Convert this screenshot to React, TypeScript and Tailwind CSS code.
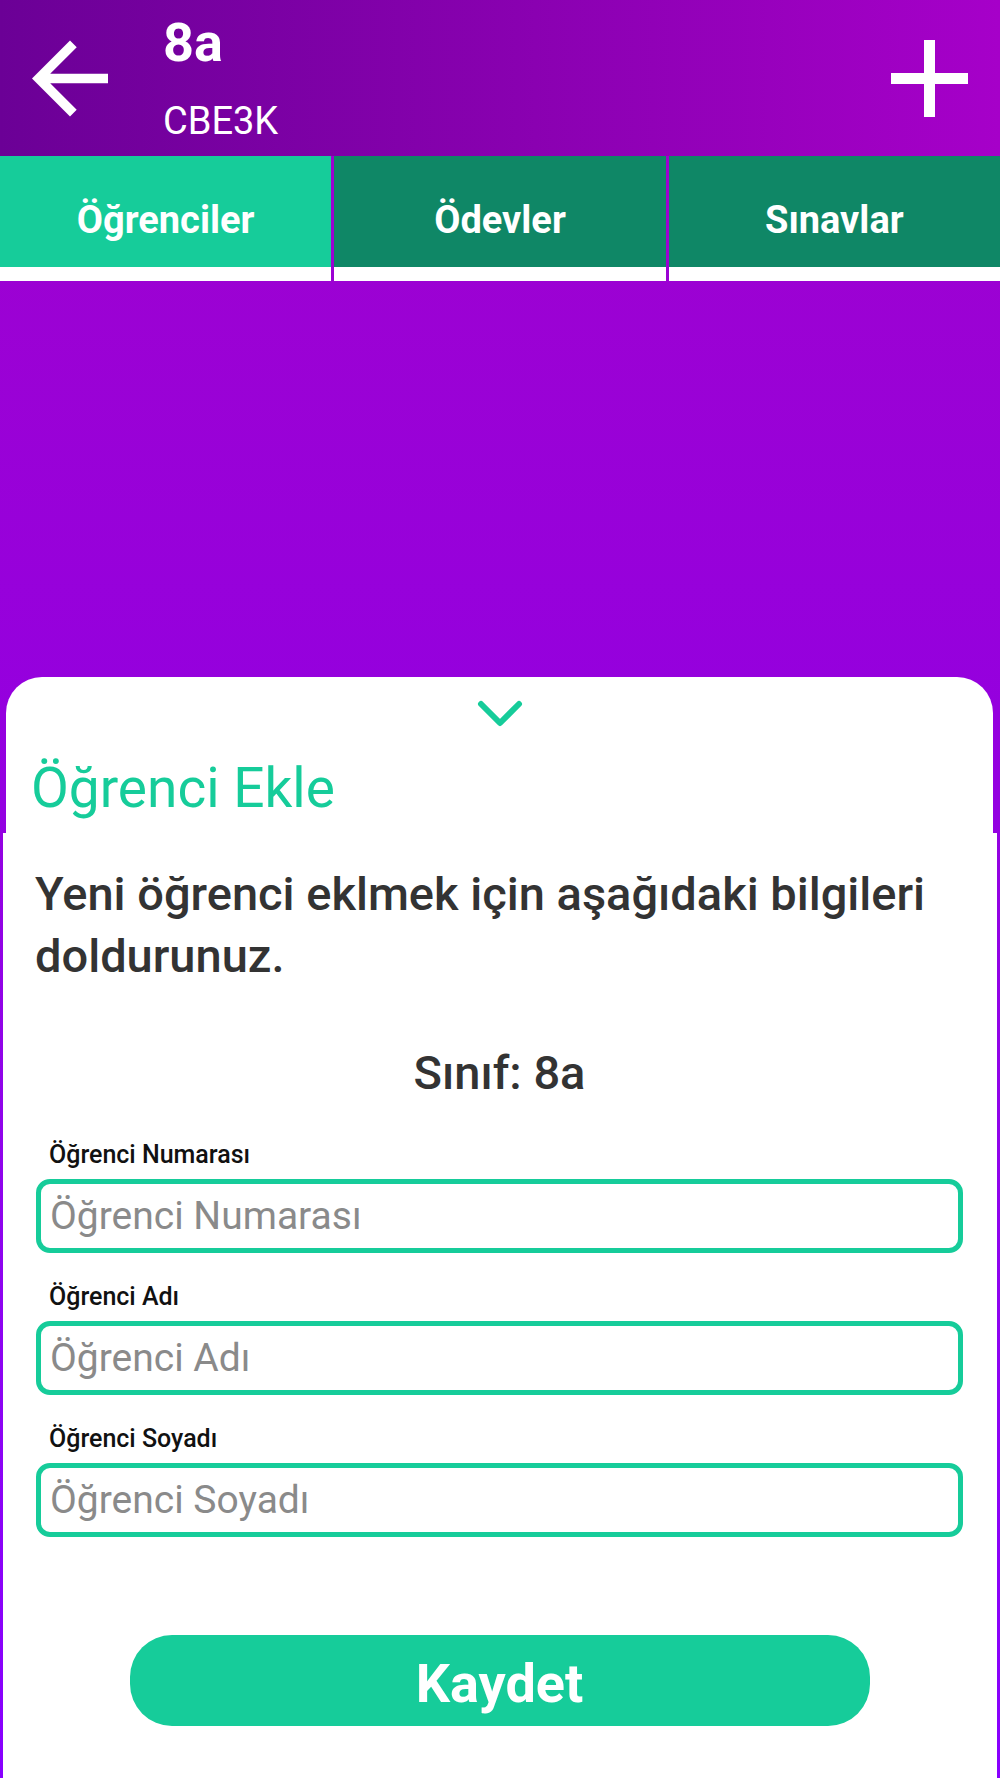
import React from "react";

const Field = ({ label, first }: { label: string; first?: boolean }) => (
  <div className={first ? "mt-[40px]" : "mt-[30px]"}>
    <div className="pl-[13px] text-[25px] leading-[28px] font-medium text-[#111111]">{label}</div>
    <div className="mt-[10px] h-[74px] border-[5px] border-[#16cc9a] rounded-[14px] flex items-center pl-[9px]">
      <input
        placeholder={label}
        className="w-full bg-transparent outline-none text-[39px] leading-[44px] text-[#333] placeholder:text-[#8a8a8a] font-['Roboto',sans-serif]"
      />
    </div>
  </div>
);

export default function App() {
  return (
    <div className="min-h-[1778px] w-full flex flex-col font-['Roboto','Noto_Sans',sans-serif] bg-linear-to-b from-[#a000cc] via-[#9500de] via-40% to-[#8800ff]">
      {/* Header */}
      <div className="h-[156px] flex bg-linear-to-r from-[#6b0096] to-[#a600c9] text-white">
        <div className="w-[163px] pl-[32px] pt-[40px] shrink-0">
          <svg width="76" height="77" viewBox="4 4 16 16" fill="white">
            <path d="M20 11H7.83l5.59-5.59L12 4l-8 8 8 8 1.41-1.41L7.83 13H20v-2z" />
          </svg>
        </div>
        <div className="flex-1 pt-[13px]">
          <div className="text-[54px] leading-[60px] font-bold">8a</div>
          <div className="mt-[26px] text-[38px] leading-[44px]">CBE3K</div>
        </div>
        <div className="pr-[32px] pt-[40px] shrink-0">
          <svg width="77" height="77" viewBox="5 5 14 14" fill="white">
            <path d="M19 13h-6v6h-2v-6H5v-2h6V5h2v6h6v2z" />
          </svg>
        </div>
      </div>

      {/* Tabs */}
      <div className="grid grid-cols-3 gap-x-[3px]">
        {[
          { t: "Öğrenciler", active: true },
          { t: "Ödevler", active: false },
          { t: "Sınavlar", active: false },
        ].map((tab) => (
          <div key={tab.t} className="flex flex-col">
            <div
              className={`h-[111px] pt-[42px] text-center text-white font-bold text-[38px] leading-[44px] ${
                tab.active ? "bg-[#16cc9a]" : "bg-[#0f8766]"
              }`}
            >
              {tab.t}
            </div>
            <div className="h-[14px] bg-white" />
          </div>
        ))}
      </div>

      <div className="h-[396px]" />

      {/* Sheet top */}
      <div className="ml-[6px] mr-[7px] h-[156px] bg-white rounded-t-[36px] pt-[23px] pl-[25px]">
        <div className="flex justify-center pr-[25px]">
          <svg width="48" height="30" viewBox="0 0 48 30">
            <polyline
              points="5,4 24,23 43,4"
              fill="none"
              stroke="#16cc9a"
              strokeWidth="6"
              strokeLinecap="round"
              strokeLinejoin="round"
            />
          </svg>
        </div>
        <div className="mt-[26px] text-[55px] leading-[64px] text-[#16cc9a]">Öğrenci Ekle</div>
      </div>

      {/* Sheet body */}
      <div className="mx-[3px] flex-1 bg-white pl-[33px] pr-[34px]">
        <div className="mt-[30px] -ml-[1px] text-[47px] leading-[62px] font-medium text-[#333333]">
          Yeni öğrenci eklmek için aşağıdaki bilgileri doldurunuz.
        </div>
        <div className="mt-[58px] text-center text-[47px] leading-[56px] font-medium text-[#333333]">
          Sınıf: 8a
        </div>
        <Field label="Öğrenci Numarası" first />
        <Field label="Öğrenci Adı" />
        <Field label="Öğrenci Soyadı" />
        <div className="mt-[98px] flex justify-center">
          <button className="w-[740px] h-[91px] rounded-[42px] bg-[#16cc9a] text-white font-bold text-[54px] leading-[60px] pt-[6px]">
            Kaydet
          </button>
        </div>
      </div>
    </div>
  );
}
